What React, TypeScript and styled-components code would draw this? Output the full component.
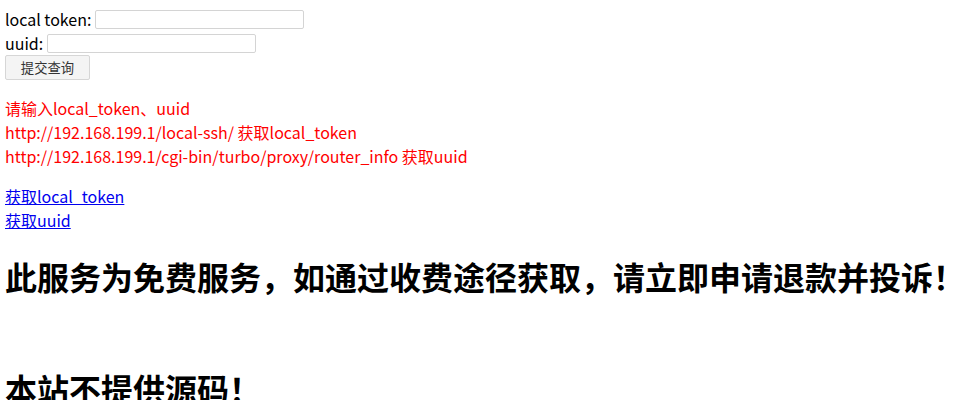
import React from "react";
import styled, { createGlobalStyle } from "styled-components";

const Global = createGlobalStyle`
  html, body { background: #fff; }
  body {
    margin: 7px 5px 5px;
    font-family: "Noto Sans CJK SC", "Noto Sans", sans-serif;
    font-size: 16px;
    color: #000;
  }
`;

const Form = styled.form`
  margin: 0;
`;

const Field = styled.div`
  display: flex;
  align-items: center;
  gap: 4px;
  height: 24px;
`;

const TextInput = styled.input`
  box-sizing: border-box;
  width: 209px;
  height: 19px;
  padding: 1px 2px;
  border: 1px solid #d4d4d4;
  border-radius: 2px;
  font: 13.33px "Noto Sans CJK SC", sans-serif;
  background: #fff;
`;

const SubmitButton = styled.button`
  box-sizing: border-box;
  display: block;
  margin-top: 0;
  width: 85px;
  height: 25px;
  padding: 0;
  white-space: nowrap;
  border: 1px solid #d6d6d6;
  border-radius: 2px;
  background: #f4f4f4;
  color: #333;
  font: 13.33px "Noto Sans CJK SC", sans-serif;
`;

const Notice = styled.p`
  margin: 16px 0;
  color: #f00;
  line-height: 24px;
`;

const Links = styled.p`
  margin: 16px 0;
  line-height: 24px;
`;

const Link = styled.a`
  color: #0000ee;
  text-decoration: underline;
`;

const Heading = styled.h1`
  margin: 21px 0;
  font-size: 32px;
  font-weight: 700;
  line-height: 46px;
  white-space: nowrap;
`;

const Spacer = styled.div`
  height: 24px;
`;

export default function App() {
  return (
    <>
      <Global />
      <Form onSubmit={(e) => e.preventDefault()}>
        <Field>
          local token:
          <TextInput type="text" />
        </Field>
        <Field>
          uuid:
          <TextInput type="text" />
        </Field>
        <SubmitButton type="submit">提交查询</SubmitButton>
      </Form>
      <Notice>
        请输入local_token、uuid
        <br />
        http://192.168.199.1/local-ssh/ 获取local_token
        <br />
        http://192.168.199.1/cgi-bin/turbo/proxy/router_info 获取uuid
      </Notice>
      <Links>
        <Link href="#">获取local_token</Link>
        <br />
        <Link href="#">获取uuid</Link>
      </Links>
      <Heading>此服务为免费服务，如通过收费途径获取，请立即申请退款并投诉！</Heading>
      <Spacer />
      <Heading>本站不提供源码！</Heading>
    </>
  );
}
